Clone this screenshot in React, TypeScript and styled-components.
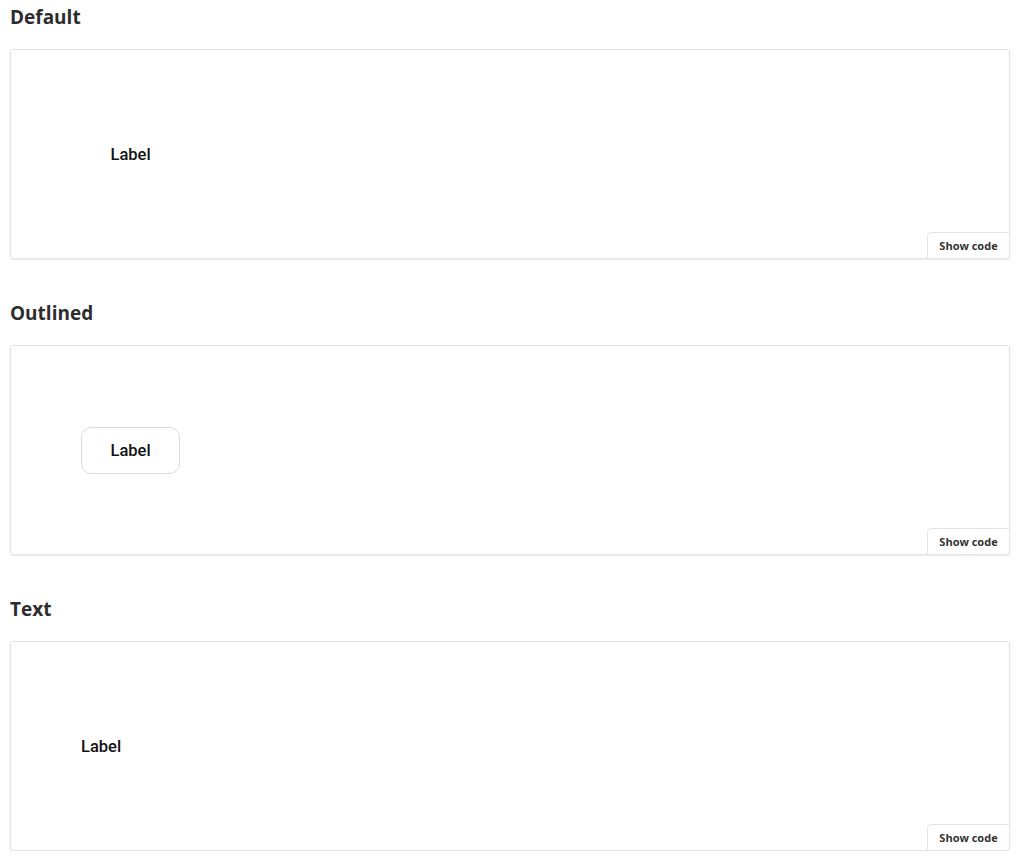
import React from "react";
import styled, { createGlobalStyle } from "styled-components";

const Global = createGlobalStyle`
  html, body { margin: 0; padding: 0; background: #ffffff; }
  body { font-family: "Open Sans", "Noto Sans", sans-serif; }
`;

const Page = styled.div`
  padding: 5px 13px 0 10px;
  display: flex;
  flex-direction: column;
  gap: 42px;
`;

const Section = styled.section`
  display: flex;
  flex-direction: column;
  gap: 20px;
`;

const Heading = styled.h2`
  margin: 0;
  font-family: "Open Sans", "Noto Sans", sans-serif;
  font-weight: 700;
  font-size: 19px;
  line-height: 24px;
  color: #2d2d2d;
`;

const Card = styled.div`
  position: relative;
  height: 210px;
  box-sizing: border-box;
  border: 1px solid #e3e3e3;
  border-radius: 3px;
  box-shadow: 0 1px 2px rgba(0, 0, 0, 0.08);
  display: flex;
  align-items: center;
  padding-left: 70px;
`;

const Button = styled.button<{ $variant: "default" | "outlined" | "text" }>`
  font-family: Roboto, "Liberation Sans", sans-serif;
  font-weight: 500;
  font-size: 16.5px;
  color: #111;
  background: transparent;
  cursor: pointer;
  box-sizing: border-box;
  height: ${(p) => (p.$variant === "text" ? "auto" : "47px")};
  padding: ${(p) => (p.$variant === "text" ? "0" : "0 28.5px")};
  border: ${(p) => (p.$variant === "outlined" ? "1px solid #dcdcdc" : "1px solid transparent")};
  border-radius: 10px;
  ${(p) => (p.$variant === "text" ? "border: none;" : "")}
`;

const ShowCode = styled.button`
  position: absolute;
  right: -1px;
  bottom: -1px;
  width: 83px;
  height: 27px;
  box-sizing: border-box;
  border: 1px solid #e3e3e3;
  border-radius: 4px 0 3px 0;
  background: #fff;
  font-family: "Open Sans", "Noto Sans", sans-serif;
  font-weight: 700;
  font-size: 11px;
  color: #333;
  padding: 0;
  cursor: pointer;
`;

const sections: { title: string; variant: "default" | "outlined" | "text" }[] = [
  { title: "Default", variant: "default" },
  { title: "Outlined", variant: "outlined" },
  { title: "Text", variant: "text" },
];

export default function App() {
  return (
    <>
      <Global />
      <Page>
        {sections.map((s) => (
          <Section key={s.title}>
            <Heading>{s.title}</Heading>
            <Card>
              <Button $variant={s.variant}>Label</Button>
              <ShowCode>Show code</ShowCode>
            </Card>
          </Section>
        ))}
      </Page>
    </>
  );
}
